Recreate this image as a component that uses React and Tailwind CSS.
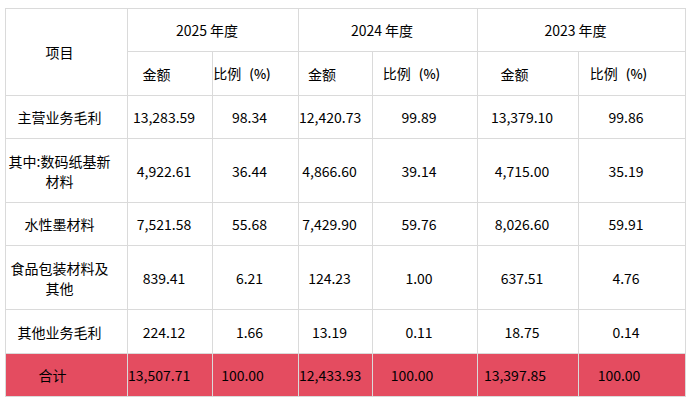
import React from "react";

const rows = [
  { label: ["主营业务毛利"], h: "h-[43px]", v: ["13,283.59", "98.34", "12,420.73", "99.89", "13,379.10", "99.86"] },
  { label: ["其中:数码纸基新", "材料"], h: "h-[64px]", v: ["4,922.61", "36.44", "4,866.60", "39.14", "4,715.00", "35.19"] },
  { label: ["水性墨材料"], h: "h-[43px]", v: ["7,521.58", "55.68", "7,429.90", "59.76", "8,026.60", "59.91"] },
  { label: ["食品包装材料及", "其他"], h: "h-[64px]", v: ["839.41", "6.21", "124.23", "1.00", "637.51", "4.76"] },
  { label: ["其他业务毛利"], h: "h-[44px]", v: ["224.12", "1.66", "13.19", "0.11", "18.75", "0.14"] },
];

const total = ["13,507.71", "100.00", "12,433.93", "100.00", "13,397.85", "100.00"];

const cell = "border border-[#dadada] p-0 text-center align-middle";

function Ratio() {
  return (
    <span>
      比例<span className="ml-[8px] text-[13px] font-medium">(%)</span>
    </span>
  );
}

export default function App() {
  return (
    <div
      className="w-[688px] h-[400px] bg-white pt-[8px] pl-[5px] text-black"
      style={{ fontFamily: '"Noto Sans CJK SC", "Noto Sans", sans-serif' }}
    >
      <table className="table-fixed border-collapse w-[680px] text-[14px] leading-[20px]">
        <colgroup>
          <col className="w-[122px]" />
          <col className="w-[85px]" />
          <col className="w-[86px]" />
          <col className="w-[74px]" />
          <col className="w-[105px]" />
          <col className="w-[101px]" />
          <col className="w-[107px]" />
        </colgroup>
        <tbody>
          <tr className="h-[43px]">
            <td rowSpan={2} className={`${cell} pr-[14px]`}>项目</td>
            <td colSpan={2} className={`${cell} pr-[12px]`}>2025 年度</td>
            <td colSpan={2} className={`${cell} pr-[12px]`}>2024 年度</td>
            <td colSpan={2} className={`${cell} pr-[12px]`}>2023 年度</td>
          </tr>
          <tr className="h-[44px]">
            <td className={`${cell} pr-[27px]`}>金额</td>
            <td className={`${cell} pr-[27px] whitespace-nowrap`}><Ratio /></td>
            <td className={`${cell} pr-[27px]`}>金额</td>
            <td className={`${cell} pr-[27px] whitespace-nowrap`}><Ratio /></td>
            <td className={`${cell} pr-[27px]`}>金额</td>
            <td className={`${cell} pr-[27px] whitespace-nowrap`}><Ratio /></td>
          </tr>
          {rows.map((r, i) => (
            <tr key={i} className={r.h}>
              <td className={`${cell} pr-[14px]`}>
                <div className="flex flex-col items-center whitespace-nowrap">
                  {r.label.map((l, j) => (
                    <span key={j}>{l}</span>
                  ))}
                </div>
              </td>
              {r.v.map((v, j) => (
                <td key={j} className={`${cell} pr-[12px] whitespace-nowrap`}>{v}</td>
              ))}
            </tr>
          ))}
          <tr className="h-[43px] bg-[#e44c60]">
            <td className={`${cell} pr-[28px]`}>合计</td>
            {total.map((v, j) => (
              <td key={j} className={`${cell} pr-[26px] whitespace-nowrap`}>{v}</td>
            ))}
          </tr>
        </tbody>
      </table>
    </div>
  );
}
